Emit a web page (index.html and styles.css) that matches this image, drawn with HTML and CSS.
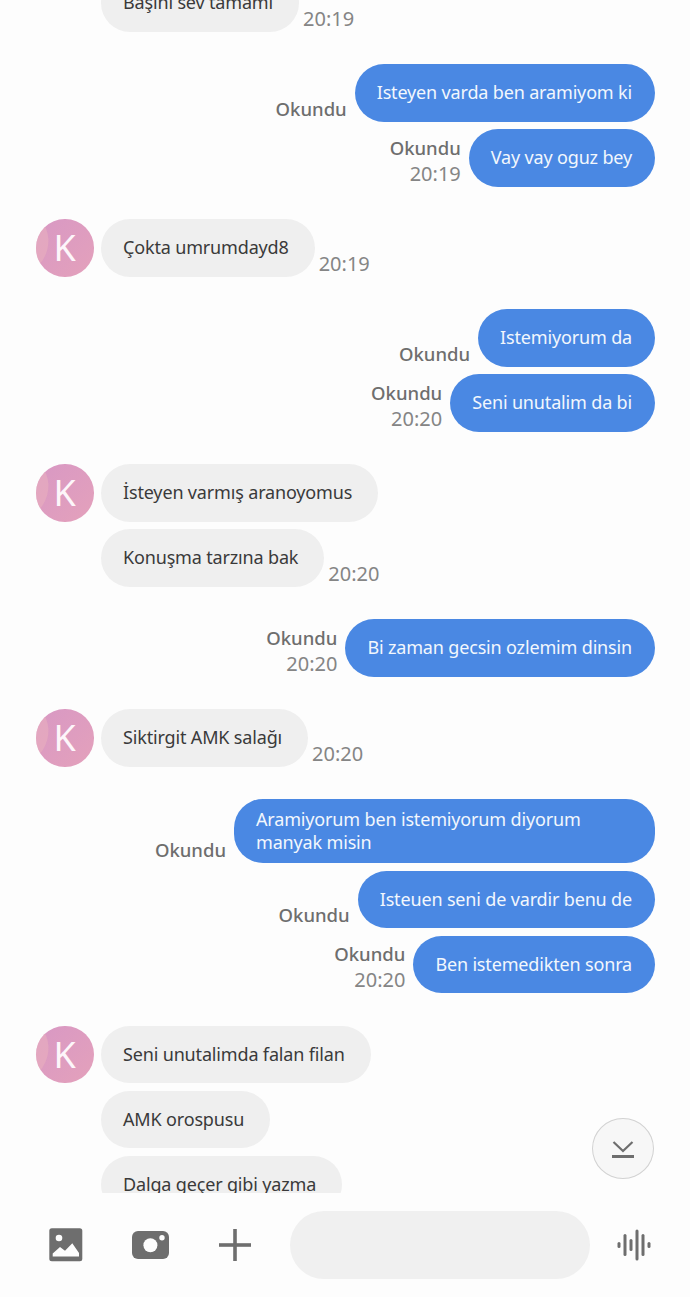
FILE: index.html
```html
<!DOCTYPE html>
<html lang="en">
<head>
    <meta charset="UTF-8">
    <title>Messages</title>
    <link rel="stylesheet" href="styles.css">
</head>
<body>
    <div class="chat">
        <div class="thread">
            <div class="group first">
                <div class="row in">
                    <div class="avatarGap"></div>
                    <div class="bubble">Başını sev tamamı</div>
                    <div class="meta"><span class="time">20:19</span></div>
                </div>
            </div>

            <div class="group">
                <div class="row out">
                    <div class="meta"><span class="read">Okundu</span></div>
                    <div class="bubble">Isteyen varda ben aramiyom ki</div>
                </div>
                <div class="row out">
                    <div class="meta"><span class="read">Okundu</span><span class="time">20:19</span></div>
                    <div class="bubble">Vay vay oguz bey</div>
                </div>
            </div>

            <div class="group">
                <div class="row in">
                    <div class="avatar">K</div>
                    <div class="bubble">Çokta umrumdayd8</div>
                    <div class="meta"><span class="time">20:19</span></div>
                </div>
            </div>

            <div class="group">
                <div class="row out">
                    <div class="meta"><span class="read">Okundu</span></div>
                    <div class="bubble">Istemiyorum da</div>
                </div>
                <div class="row out">
                    <div class="meta"><span class="read">Okundu</span><span class="time">20:20</span></div>
                    <div class="bubble">Seni unutalim da bi</div>
                </div>
            </div>

            <div class="group">
                <div class="row in">
                    <div class="avatar">K</div>
                    <div class="bubble">İsteyen varmış aranoyomus</div>
                </div>
                <div class="row in">
                    <div class="avatarGap"></div>
                    <div class="bubble">Konuşma tarzına bak</div>
                    <div class="meta"><span class="time">20:20</span></div>
                </div>
            </div>

            <div class="group">
                <div class="row out">
                    <div class="meta"><span class="read">Okundu</span><span class="time">20:20</span></div>
                    <div class="bubble">Bi zaman gecsin ozlemim dinsin</div>
                </div>
            </div>

            <div class="group">
                <div class="row in">
                    <div class="avatar">K</div>
                    <div class="bubble">Siktirgit AMK salağı</div>
                    <div class="meta"><span class="time">20:20</span></div>
                </div>
            </div>

            <div class="group">
                <div class="row out">
                    <div class="meta"><span class="read">Okundu</span></div>
                    <div class="bubble wrapped">Aramiyorum ben istemiyorum diyorum manyak misin</div>
                </div>
                <div class="row out">
                    <div class="meta"><span class="read">Okundu</span></div>
                    <div class="bubble">Isteuen seni de vardir benu de</div>
                </div>
                <div class="row out">
                    <div class="meta"><span class="read">Okundu</span><span class="time">20:20</span></div>
                    <div class="bubble">Ben istemedikten sonra</div>
                </div>
            </div>

            <div class="group">
                <div class="row in">
                    <div class="avatar">K</div>
                    <div class="bubble">Seni unutalimda falan filan</div>
                </div>
                <div class="row in">
                    <div class="avatarGap"></div>
                    <div class="bubble">AMK orospusu</div>
                </div>
                <div class="row in">
                    <div class="avatarGap"></div>
                    <div class="bubble">Dalga geçer gibi yazma</div>
                </div>
            </div>
        </div>

        <button class="scrollDown" type="button" aria-label="Scroll to bottom">
            <svg width="22" height="17" viewBox="0 0 22 17">
                <path d="M1.500 1 11 10 20.500 1" fill="none" stroke="#6e6e6e" stroke-width="2.200"/>
                <rect x="0" y="14" width="22" height="3" fill="#6e6e6e"/>
            </svg>
        </button>
    </div>

    <div class="composer">
        <div class="tools">
            <svg width="34" height="34" viewBox="0 0 34 34">
                <rect x="0.300" y="0.300" width="33" height="33" rx="2.500" fill="#6e6e6e"/>
                <circle cx="10" cy="10" r="3.300" fill="#fdfdfd"/>
                <path d="M3.700 28.500V25.500L11 19 16 22.700 23.300 15.300 30 25V28.500Z" fill="#fdfdfd"/>
            </svg>
            <svg width="37" height="28" viewBox="0 0 37 28">
                <rect x="0" y="0" width="37" height="28" rx="6" fill="#6e6e6e"/>
                <circle cx="18.400" cy="14.200" r="7" fill="#fdfdfd"/>
                <circle cx="30" cy="6.700" r="2.700" fill="#fdfdfd"/>
            </svg>
            <svg class="toolPlus" width="32" height="32" viewBox="0 0 32 32">
                <rect x="14.200" y="0" width="3.600" height="32" fill="#6e6e6e"/>
                <rect x="0" y="14.200" width="32" height="3.600" fill="#6e6e6e"/>
            </svg>
        </div>
        <div class="messageInput"></div>
        <svg class="toolVoice" width="34" height="32" viewBox="0 0 34 32" fill="#6e6e6e">
            <rect x="0.500" y="13" width="3" height="6" rx="1.500"/>
            <rect x="6.500" y="5" width="3" height="22" rx="1.500"/>
            <rect x="12.500" y="10" width="3" height="12" rx="1.500"/>
            <rect x="18.500" y="0.500" width="3" height="31" rx="1.500"/>
            <rect x="24.500" y="5" width="3" height="22" rx="1.500"/>
            <rect x="30.500" y="13" width="3" height="6" rx="1.500"/>
        </svg>
    </div>
</body>
</html>
```

FILE: styles.css
```css
* {
    box-sizing: border-box;
}

html, body {
    height: 100%;
}

body {
    margin: 0;
    background: #fdfdfd;
    font-family: "Noto Sans", sans-serif;
    overflow: hidden;
}

.chat {
    position: relative;
    height: 1193px;
    overflow: hidden;
}

.thread {
    display: flex;
    flex-direction: column;
    gap: 32.500px;
    padding: 0 35px 0 36px;
}

.group {
    display: flex;
    flex-direction: column;
    gap: 7.500px;
}

.first {
    margin-top: -26px;
}

.row {
    display: flex;
    align-items: flex-end;
    gap: 8px;
}

.in {
    gap: 7.500px;
}

.out {
    justify-content: flex-end;
}

.avatar, .avatarGap {
    flex: none;
    width: 57.500px;
    height: 57.500px;
}

.avatar {
    position: relative;
    overflow: hidden;
    display: flex;
    align-items: center;
    justify-content: center;
    border-radius: 50%;
    background: linear-gradient(135deg, #d898c4, #e4a1bb);
    color: #fdf6fa;
    font-size: 36px;
}

.avatar::before {
    content: "";
    position: absolute;
    left: -34px;
    top: -4px;
    width: 46px;
    height: 58px;
    border-radius: 50%;
    background: rgba(236, 180, 190, 0.5);
    transform: rotate(15deg);
}

.bubble {
    display: flex;
    align-items: center;
    min-height: 57.500px;
    padding: 9px 23px 9px 22px;
    border-radius: 29px;
    font-size: 18px;
    letter-spacing: -0.16px;
    line-height: 23px;
    white-space: nowrap;
}

.in .bubble {
    padding-right: 26px;
    background: #efefef;
    color: #3a3a3a;
}

.out .bubble {
    background: #4a88e3;
    color: #f2f7fd;
}

.out .wrapped {
    width: 421px;
    white-space: normal;
}

.meta {
    display: flex;
    flex-direction: column;
    align-items: flex-end;
    line-height: 26px;
}

.in .meta {
    margin-left: -3.500px;
}

.read {
    color: #6e6e6e;
    font-size: 18.500px;
    font-weight: 500;
}

.time {
    color: #858585;
    font-size: 20px;
}

.scrollDown {
    position: absolute;
    left: 592px;
    top: 1118px;
    width: 62px;
    height: 61px;
    padding: 2px 0 0;
    display: flex;
    align-items: center;
    justify-content: center;
    background: #f7f7f7;
    border: 1px solid #d2d2d2;
    border-radius: 50%;
}

.composer {
    display: flex;
    align-items: center;
    height: 104px;
    padding: 0 36px 0 49px;
}

.tools {
    display: flex;
    align-items: center;
    gap: 49px;
    width: 241px;
}

.tools svg {
    flex: none;
}

.tools .toolPlus {
    margin-left: 1px;
}

.messageInput {
    width: 300px;
    height: 68px;
    border-radius: 34px;
    background: #f0f0f0;
}

.toolVoice {
    margin-left: 27px;
}
```
